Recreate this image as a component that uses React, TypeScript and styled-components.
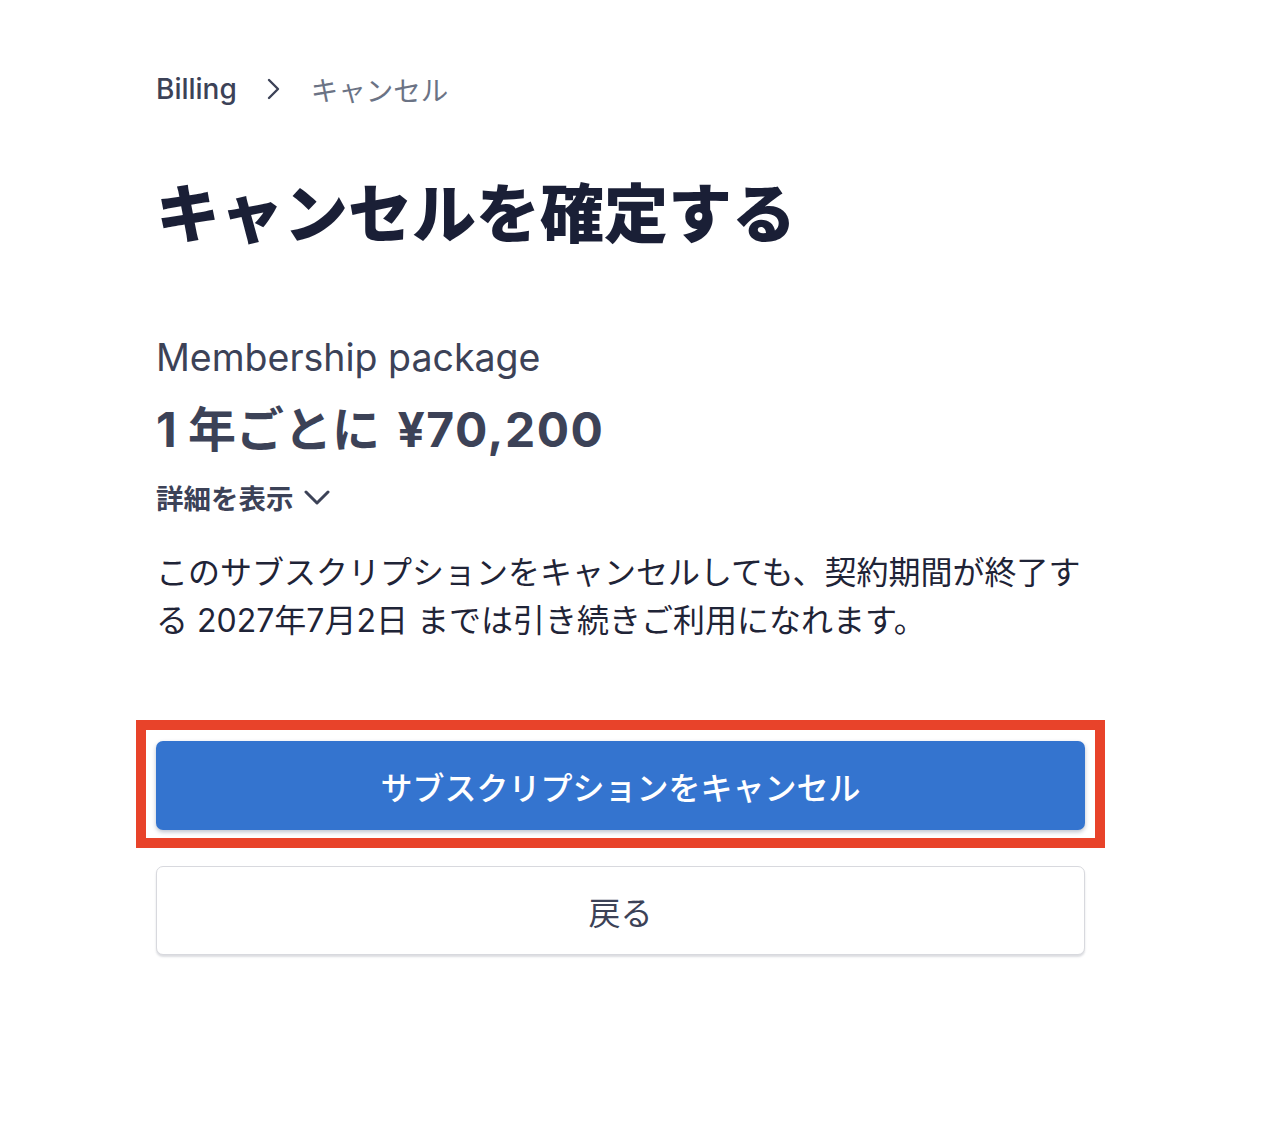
import styled, { createGlobalStyle } from "styled-components";

const GlobalStyle = createGlobalStyle`
  body {
    margin: 0;
    background: #ffffff;
    font-family: Inter, "Noto Sans CJK JP", sans-serif;
    color: #3c4257;
  }
`;

function ChevronRight() {
  return (
    <svg width="18" height="24" viewBox="0 0 18 24" fill="none">
      <path d="M4 3l9 9-9 9" stroke="#3c4257" strokeWidth="2.4" strokeLinecap="round" strokeLinejoin="round" />
    </svg>
  );
}

function ChevronDown() {
  return (
    <svg width="26" height="15" viewBox="0 0 26 15" fill="none">
      <path d="M2 2l11 11 11-11" stroke="#3c4257" strokeWidth="3" strokeLinecap="round" strokeLinejoin="round" />
    </svg>
  );
}

function App() {
  return (
    <>
      <GlobalStyle />
      <Page>
        <Breadcrumb>
          <span className="parent">Billing</span>
          <ChevronRight />
          <span className="current">キャンセル</span>
        </Breadcrumb>

        <Title>キャンセルを確定する</Title>

        <PackageName>Membership package</PackageName>
        <Price>
          1 年ごとに <span className="amount">¥70,200</span>
        </Price>
        <DetailsToggle>
          詳細を表示
          <ChevronDown />
        </DetailsToggle>

        <Notice>
          このサブスクリプションをキャンセルしても、契約期間が終了する 2027年7月2日 までは引き続きご利用になれます。
        </Notice>

        <Highlight>
          <PrimaryButton>サブスクリプションをキャンセル</PrimaryButton>
        </Highlight>
        <SecondaryButton>戻る</SecondaryButton>
      </Page>
    </>
  );
}

export default App;

const Page = styled.div`
  width: 929px;
  margin-left: 156px;
  padding-top: 71px;
  padding-bottom: 160px;
`;

const Breadcrumb = styled.nav`
  display: flex;
  align-items: center;
  gap: 28px;
  height: 36px;
  font-size: 28px;

  > .parent {
    color: #3c4257;
    font-weight: 500;
  }

  > .current {
    color: #6b7385;
    font-weight: 400;
    font-size: 27.5px;
  }
`;

const Title = styled.h1`
  margin: 67px 0 0 0;
  font-size: 64px;
  line-height: 80px;
  font-weight: 800;
  color: #1a1f36;
`;

const PackageName = styled.div`
  margin-top: 82px;
  font-size: 37.5px;
  line-height: 44px;
  font-weight: 400;
  color: #3c4257;
`;

const Price = styled.div`
  margin-top: 22px;
  font-size: 48px;
  line-height: 56px;
  font-weight: 700;
  color: #3c4257;

  > .amount {
    margin-left: 6px;
    letter-spacing: 1.5px;
  }
`;

const DetailsToggle = styled.button`
  display: flex;
  align-items: center;
  gap: 10px;
  margin-top: 21px;
  padding: 0;
  height: 36px;
  border: none;
  background: transparent;
  font-family: inherit;
  font-size: 27.5px;
  font-weight: 600;
  color: #3c4257;
  cursor: pointer;
`;

const Notice = styled.p`
  margin: 34px 0 0 0;
  font-size: 32px;
  line-height: 48px;
  color: #1f2437;
`;

const Highlight = styled.div`
  margin: 75px 0 0 -20px;
  width: fit-content;
  padding: 11px 10px 8px;
  border: 10px solid #e8432a;
`;

const Button = styled.button`
  display: flex;
  align-items: center;
  justify-content: center;
  width: 929px;
  height: 89px;
  border-radius: 7px;
  font-family: inherit;
  font-size: 32px;
  cursor: pointer;
`;

const PrimaryButton = styled(Button)`
  border: none;
  background: #3474cf;
  color: #ffffff;
  font-weight: 500;
  box-shadow: 0 2px 4px rgba(30, 50, 90, 0.3);
`;

const SecondaryButton = styled(Button)`
  margin-top: 18px;
  border: 1.5px solid #d8d9de;
  background: #ffffff;
  color: #3c4257;
  font-weight: 400;
  box-shadow: 0 2px 2px rgba(60, 66, 87, 0.18);
`;
